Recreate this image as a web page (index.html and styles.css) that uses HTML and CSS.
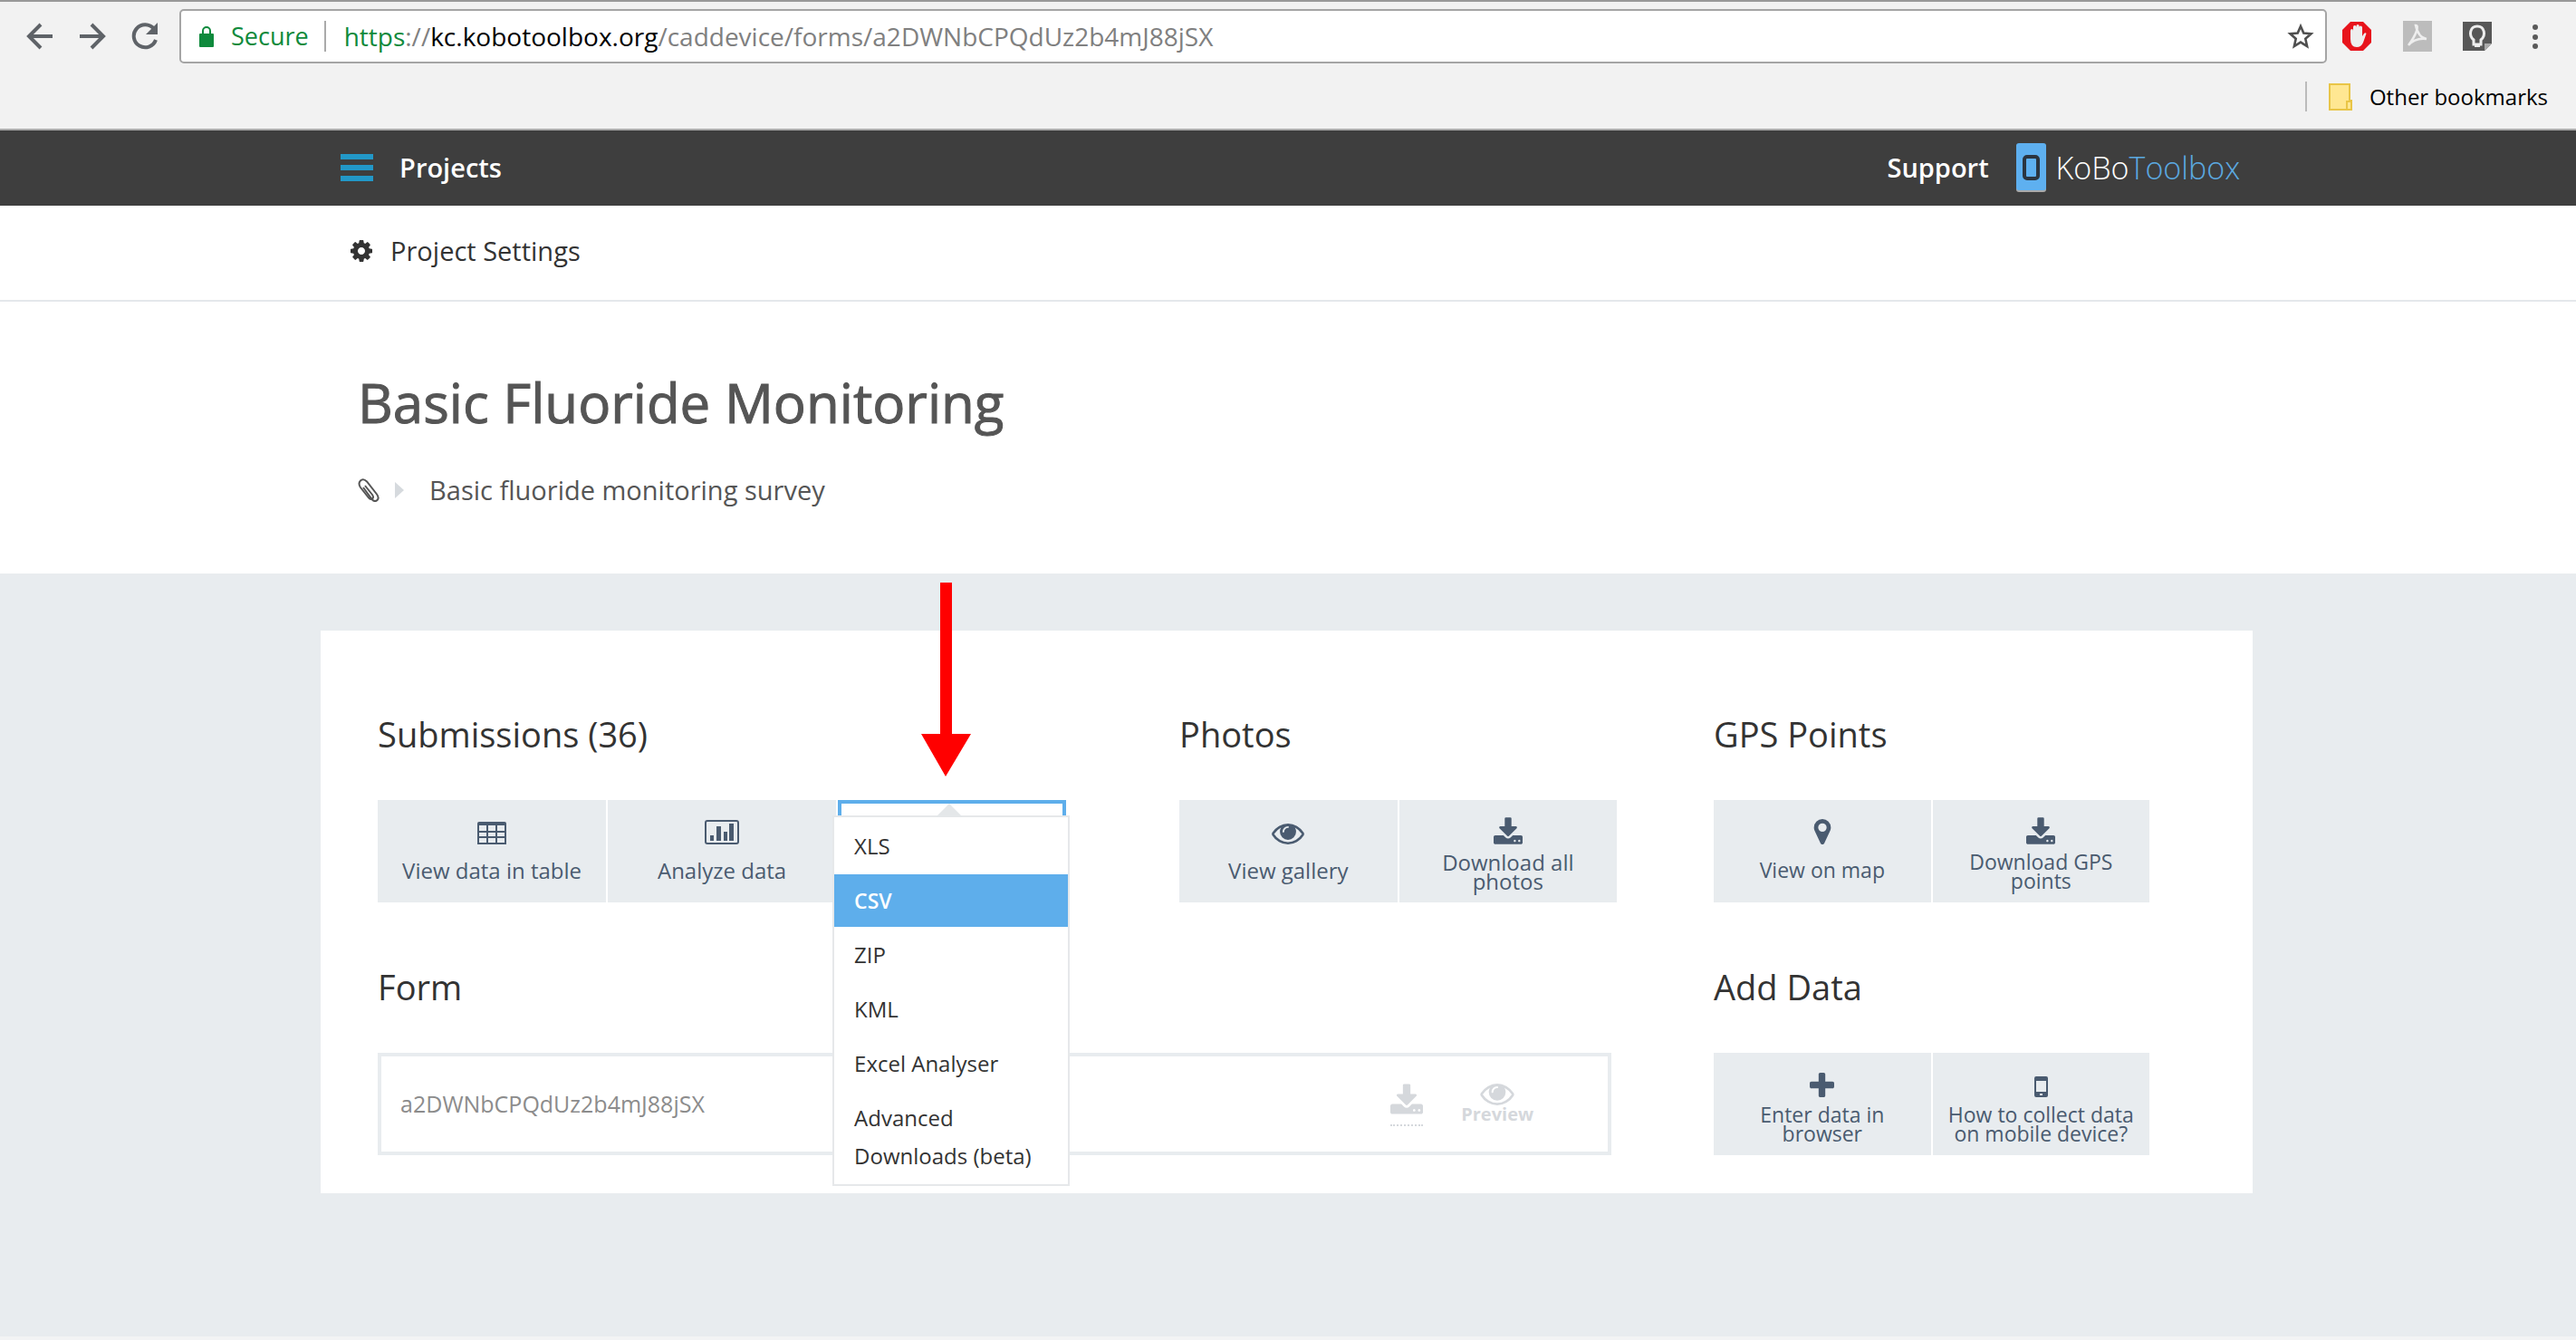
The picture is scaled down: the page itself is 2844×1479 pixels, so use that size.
FILE: index.html
```html
<!DOCTYPE html>
<html lang="en">
<head>
<meta charset="utf-8">
<meta name="viewport" content="width=device-width, initial-scale=1">
<title>Basic Fluoride Monitoring</title>
<link rel="stylesheet" href="styles.css">
</head>
<body>
<svg class="sprite" aria-hidden="true">
  <symbol id="i-download" viewBox="64 0 1664 1536"><path d="M1344 1344q0-26-19-45t-45-19-45 19-19 45 19 45 45 19 45-19 19-45zm256 0q0-26-19-45t-45-19-45 19-19 45 19 45 45 19 45-19 19-45zm128-224v320q0 40-28 68t-68 28h-1472q-40 0-68-28t-28-68v-320q0-40 28-68t68-28h465l135 136q58 56 136 56t136-56l136-136h464q40 0 68 28t28 68zm-325-569q17 41-14 70l-448 448q-18 19-45 19t-45-19l-448-448q-31-29-14-70 17-39 59-39h256v-448q0-26 19-45t45-19h256q26 0 45 19t19 45v448h256q42 0 59 39z"/></symbol>
  <symbol id="i-eye" viewBox="0 384 1792 1152"><path d="M1664 960q-152-236-381-353 61 104 61 225 0 185-131.5 316.5t-316.5 131.5-316.5-131.5-131.5-316.5q0-121 61-225-229 117-381 353 133 205 333.5 326.5t434.5 121.5 434.5-121.5 333.5-326.5zm-720-384q0-20-14-34t-34-14q-125 0-214.5 89.5t-89.5 214.5q0 20 14 34t34 14 34-14 14-34q0-86 61-147t147-61q20 0 34-14t14-34zm848 384q0 34-20 69-140 230-376.5 368.5t-499.5 138.5-499.5-139-376.5-368q-20-35-20-69t20-69q140-229 376.5-368t499.5-139 499.5 139 376.5 368q20 35 20 69z"/></symbol>
</svg>

<div class="browser">
  <div class="toolbar">
    <button class="tool" aria-label="Back"><svg width="30" height="30" viewBox="0 0 30 30"><path d="M29 15H3M16 2 3 15l13 13" fill="none" stroke="#5f6368" stroke-width="4"/></svg></button>
    <button class="tool" aria-label="Forward"><svg width="30" height="30" viewBox="0 0 30 30"><path d="M1 15h26M14 2l13 13-13 13" fill="none" stroke="#5f6368" stroke-width="4"/></svg></button>
    <button class="tool" aria-label="Reload"><svg width="30" height="30" viewBox="0 0 30 30"><path d="M25 7A12.500 12.500 0 1 0 27 19" fill="none" stroke="#5f6368" stroke-width="4"/><path d="M29 0v13H16z" fill="#5f6368"/></svg></button>
    <div class="address">
      <svg width="16" height="24" viewBox="0 0 16 24"><path d="M4 10V6a4 4 0 0 1 8 0v4" fill="none" stroke="#0f8a3c" stroke-width="2"/><rect y="9" width="16" height="15" rx="1" fill="#0f8a3c"/></svg>
      <span class="secure">Secure</span>
      <div class="url" role="textbox" aria-label="Address"><span class="scheme">https</span>://<span class="host">kc.kobotoolbox.org</span>/caddevice/forms/a2DWNbCPQdUz2b4mJ88jSX</div>
      <button class="tool" aria-label="Bookmark this page"><svg width="30" height="30" viewBox="0 0 30 30"><path d="m15 4 3.300 7.500 8.200.8-6.200 5.400 1.800 8.300-7.100-4.400L7.900 26l1.800-8.300-6.200-5.400 8.200-.8z" fill="none" stroke="#4f4f4f" stroke-width="2.600"/></svg></button>
    </div>
    <div class="extensions">
      <button class="tool" aria-label="Ad blocker"><svg width="34" height="34" viewBox="0 0 34 34"><path d="M10 1h14l9 9v14l-9 9H10l-9-9V10z" fill="#e8141c"/><path d="M10 20V11q0-2 1.500-2T13 11V7q0-2 1.700-2T16.500 7V5.500Q16.500 4 18 4t1.700 1.500V7q0-1.500 1.500-1.500T23 7v10l2-3q1.500-1.500 2.500 0L24 24q-2 5-7 5-7 0-7-9z" fill="#eee"/></svg></button>
      <button class="tool" aria-label="PDF"><svg width="32" height="34" viewBox="0 0 32 34"><path d="M0 0h32v34H0z" fill="#bcbcbc"/><path d="M14 5c4 0 1 10-8 22 5-6 12-8 20-7-6-1-10-6-12-15z" fill="none" stroke="#eee" stroke-width="2.500"/></svg></button>
      <button class="tool" aria-label="Keep"><svg width="32" height="32" viewBox="0 0 32 32"><path d="M0 0h32v24l-8 8H0z" fill="#585858"/><path d="M32 24h-8v8z" fill="#aaa"/><path d="M12 20c-6-5-4-15 4-15s10 10 4 15v5h-8z" fill="none" stroke="#eee" stroke-width="3"/><path d="M13 24h6v4h-6z" fill="#eee"/></svg></button>
      <button class="tool" aria-label="Menu"><svg width="28" height="32" viewBox="0 0 28 32" fill="#5a5a5a"><circle cx="14" cy="6" r="3"/><circle cx="14" cy="17" r="3"/><circle cx="14" cy="27" r="3"/></svg></button>
    </div>
  </div>
  <div class="bookmarks">
    <a class="bookmark" href="#"><svg width="26" height="30" viewBox="0 0 26 30"><path d="M1 1h22v18h2v10H1z" fill="#ffe792" stroke="#e9c547" stroke-width="2"/><path d="M20 28v-8h4" fill="none" stroke="#e9c547" stroke-width="2"/></svg>Other bookmarks</a>
  </div>
</div>

<header class="navbar">
  <div class="container navbar-inner">
    <a class="nav-link" href="#"><svg width="36" height="30" viewBox="0 0 36 30" fill="#2298c8"><path d="M0 0h36v6H0zM0 12h36v6H0zM0 24h36v6H0z"/></svg>Projects</a>
    <div class="nav-right">
      <a class="nav-link" href="#">Support</a>
      <a class="logo" href="#"><svg width="34" height="54" viewBox="0 0 34 54"><rect y="1" width="33" height="53" rx="3" fill="#a9a9a9"/><rect width="33" height="52" rx="3" fill="#5eb0f0"/><rect x="9" y="15" width="15" height="24" rx="3" fill="none" stroke="#2b3540" stroke-width="4"/></svg><span>KoBo<span class="logo-tail">Toolbox</span></span></a>
    </div>
  </div>
</header>

<nav class="subnav">
  <div class="container subnav-inner">
    <a class="settings" href="#"><svg width="24" height="24" viewBox="128 128 1536 1536"><path d="M1152 896q0-106-75-181t-181-75-181 75-75 181 75 181 181 75 181-75 75-181zm512-109v222q0 12-8 23t-20 13l-185 28q-19 54-39 91 35 50 107 138 10 12 10 25t-9 23q-27 37-99 108t-94 71q-12 0-26-9l-138-108q-44 23-91 38-16 136-29 186-7 28-36 28h-222q-14 0-24.500-8.500t-11.500-21.500l-28-184q-49-16-90-37l-141 107q-10 9-25 9-14 0-25-11-126-114-165-168-7-10-7-23 0-12 8-23 15-21 51-66.500t54-70.500q-27-50-41-99l-183-27q-13-2-21-12.500t-8-23.500v-222q0-12 8-23t19-13l186-28q14-46 39-92-40-57-107-138-10-12-10-24 0-10 9-23 26-36 98.500-107.500t94.500-71.500q13 0 26 10l138 107q44-23 91-38 16-136 29-186 7-28 36-28h222q14 0 24.500 8.500t11.500 21.500l28 184q49 16 90 37l142-107q9-9 24-9 13 0 25 10 129 119 165 170 7 8 7 22 0 12-8 23-15 21-51 66.500t-54 70.500q26 50 41 98l183 28q13 2 21 12.500t8 23.500z"/></svg>Project Settings</a>
  </div>
</nav>

<section class="hero">
  <div class="container hero-inner">
    <h1>Basic Fluoride Monitoring</h1>
    <p class="survey">
      <svg width="24" height="26" viewBox="0 0 24 26"><path d="M8 8l8 10q2 3 0 4.500t-4-1L3 10Q0 5.500 3 2.500t7 1l11 14q3 4 .500 6.500t-5.500-.5L6 10" fill="none" stroke="#555" stroke-width="2"/></svg>
      <svg class="survey-caret" width="10" height="18" viewBox="0 0 10 18"><path d="M0 0l10 9-10 9z" fill="#d6dade"/></svg>
      Basic fluoride monitoring survey
    </p>
  </div>
</section>

<main class="page">
  <div class="container card">
    <section class="group group-submissions">
      <h2>Submissions (36)</h2>
      <div class="tiles">
        <a class="tile" href="#"><span class="tile-icon"><svg width="32" height="25" viewBox="0 0 32 25"><path d="M1 3h30v21H1zM1 11h30M1 17h30M11 3v21M21 3v21" fill="none" stroke="#4a5b70" stroke-width="2"/><path d="M0 2q0-2 2-2h28q2 0 2 2v2H0z"/></svg></span><span class="tile-label">View data in table</span></a>
        <a class="tile" href="#"><span class="tile-icon"><svg width="38" height="27" viewBox="0 0 38 27"><rect x="1" y="1" width="36" height="25" rx="2" fill="none" stroke="#4a5b70" stroke-width="2"/><path d="M6 17h4v6H6zM13 7h5v16h-5zM21 13h4v10h-4zM27 4h5v19h-5z"/></svg></span><span class="tile-label">Analyze data</span></a>
        <div class="dropdown">
          <button class="tile tile-open" aria-label="Download data" aria-expanded="true"></button>
          <svg class="pointer" width="56" height="214" viewBox="0 0 56 214"><path d="M21 0h13v167h21L27 214 0 167h21z" fill="#f00"/></svg>
          <div class="menu">
            <a href="#">XLS</a>
            <a class="active" href="#">CSV</a>
            <a href="#">ZIP</a>
            <a href="#">KML</a>
            <a href="#">Excel Analyser</a>
            <a href="#">Advanced Downloads (beta)</a>
          </div>
        </div>
      </div>
    </section>

    <section class="group group-photos">
      <h2>Photos</h2>
      <div class="tiles">
        <a class="tile" href="#"><span class="tile-icon"><svg width="36" height="23"><use href="#i-eye"/></svg></span><span class="tile-label">View gallery</span></a>
        <a class="tile" href="#"><span class="tile-icon"><svg width="32" height="30"><use href="#i-download"/></svg></span><span class="tile-label">Download all photos</span></a>
      </div>
    </section>

    <section class="group group-narrow">
      <h2>GPS Points</h2>
      <div class="tiles">
        <a class="tile" href="#"><span class="tile-icon"><svg width="20" height="28" viewBox="384 128 1024 1536"><path d="M1152 640q0-106-75-181t-181-75-181 75-75 181 75 181 181 75 181-75 75-181zm256 0q0 109-33 179l-364 774q-16 33-47.500 52t-67.500 19-67.500-19-46.500-52l-365-774q-33-70-33-179 0-212 150-362t362-150 362 150 150 362z"/></svg></span><span class="tile-label">View on map</span></a>
        <a class="tile" href="#"><span class="tile-icon"><svg width="32" height="30"><use href="#i-download"/></svg></span><span class="tile-label">Download GPS points</span></a>
      </div>
    </section>

    <section class="group group-form">
      <h2>Form</h2>
      <div class="form-box">
        <span class="form-id">a2DWNbCPQdUz2b4mJ88jSX</span>
        <a class="form-download" href="#" aria-label="Download form"><svg width="36" height="34"><use href="#i-download"/></svg></a>
        <a class="form-preview" href="#"><svg width="38" height="24"><use href="#i-eye"/></svg>Preview</a>
      </div>
    </section>

    <section class="group group-narrow">
      <h2>Add Data</h2>
      <div class="tiles">
        <a class="tile" href="#"><span class="tile-icon"><svg width="27" height="27" viewBox="192 128 1408 1408"><path d="M1600 736v192q0 40-28 68t-68 28h-416v416q0 40-28 68t-68 28h-192q-40 0-68-28t-28-68v-416h-416q-40 0-68-28t-28-68v-192q0-40 28-68t68-28h416v-416q0-40 28-68t68-28h192q40 0 68 28t28 68v416h416q40 0 68 28t28 68z"/></svg></span><span class="tile-label">Enter data in browser</span></a>
        <a class="tile" href="#"><span class="tile-icon"><svg width="15" height="23" viewBox="0 0 15 23"><path fill-rule="evenodd" d="M2 0h11q2 0 2 2v19q0 2-2 2H2q-2 0-2-2V2q0-2 2-2zm0 5v12h11V5zm4 14v2h3v-2z"/></svg></span><span class="tile-label">How to collect data on mobile device?</span></a>
      </div>
    </section>
  </div>
</main>
</body>
</html>
```
FILE: styles.css
```css
* { box-sizing: border-box; }

body {
  margin: 0;
  min-height: 100vh;
  display: flex;
  flex-direction: column;
  background: #fff;
  color: #333;
  font-family: "Open Sans", sans-serif;
  font-size: 24px;
}

a { color: inherit; text-decoration: none; }
svg { display: block; flex: none; }
.sprite { position: absolute; width: 0; height: 0; }
.container { width: 75%; margin: 0 12.55% 0 12.45%; }

/* Browser chrome */
.browser {
  background: #f2f2f2;
  border-top: 2px solid #999;
  border-bottom: 2px solid #ababab;
}
.toolbar {
  display: flex;
  align-items: center;
  gap: 28px;
  padding: 8px 31px 0 29px;
}
.tool {
  flex: none;
  padding: 0;
  border: 0;
  background: none;
}
.address {
  flex: 1;
  display: flex;
  align-items: center;
  height: 60px;
  margin-left: -5px;
  padding: 0 12px 0 20px;
  border: 2px solid #a5a5a5;
  border-radius: 5px;
  background: #fff;
  font-size: 28px;
}
.secure {
  margin-left: 19px;
  padding-right: 17px;
  border-right: 2px solid #aaa;
  color: #0f8a3c;
  font-size: 27px;
  line-height: 34px;
}
.url { flex: 1; margin-left: 20px; color: #808080; }
.scheme { color: #0f8a3c; }
.host { color: #000; }
.extensions {
  display: flex;
  align-items: center;
  gap: 34px;
  margin-left: -12px;
}
.bookmarks {
  display: flex;
  justify-content: flex-end;
  padding: 20px 31px 19px 0;
}
.bookmark {
  display: flex;
  align-items: center;
  gap: 19px;
  padding-left: 24px;
  border-left: 2px solid #bbb;
  color: #000;
  line-height: 33px;
}

/* Site header */
.navbar { background: #3e3e3e; }
.navbar-inner {
  display: flex;
  align-items: center;
  justify-content: space-between;
  height: 83px;
  padding: 0 14px 2px 22px;
  color: #fff;
}
.nav-link {
  display: flex;
  align-items: center;
  gap: 29px;
  font-size: 29px;
  font-weight: 600;
}
.nav-right { display: flex; align-items: center; gap: 30px; }
.logo {
  display: flex;
  align-items: center;
  gap: 10px;
  font-size: 34px;
  font-weight: 300;
}
.logo-tail { color: #5ba9e0; }

.subnav { border-bottom: 2px solid #e4e8eb; }
.subnav-inner { padding: 30px 33px 34px; }
.settings {
  display: inline-flex;
  align-items: center;
  gap: 20px;
  fill: #333;
  font-size: 29px;
  line-height: 40px;
}

/* Project title */
.hero-inner { padding: 71px 41px 72px; color: #555; }
h1 {
  margin: 0 0 37px;
  font-size: 60px;
  font-weight: 400;
  line-height: 80px;
  -webkit-text-stroke: 1px #555;
}
.survey {
  display: flex;
  align-items: center;
  margin: 0;
  font-size: 29px;
  line-height: 40px;
}
.survey-caret { margin: 0 28px 0 17px; }

/* Dashboard */
.page {
  flex: 1;
  padding: 63px 0;
  background: #e8ecef;
  border-bottom: 4px solid #f2f3f4;
}
.card {
  display: grid;
  grid-template-columns: 885fr 590fr 481fr;
  row-gap: 67px;
  padding: 88px 114px 42px 63px;
  background: #fff;
}
.group-submissions { padding-right: 125px; }
.group-photos { padding-right: 107px; }
.group-form { grid-column: span 2; padding-right: 113px; }
h2 {
  margin: 0 0 47px;
  font-size: 38px;
  font-weight: 400;
  line-height: 52px;
}
.tiles {
  display: grid;
  grid-auto-flow: column;
  grid-auto-columns: 1fr;
  gap: 2px;
}
.tile {
  display: flex;
  flex-direction: column;
  align-items: center;
  gap: 9px;
  height: 113px;
  padding: 19px 12px 0;
  background: #e8ecef;
  color: #4a5b70;
  fill: #4a5b70;
  line-height: 21px;
  text-align: center;
}
.group-narrow .tile { padding: 19px 8px 0; font-size: 23px; }
.group-photos .tile { padding: 19px 40px 0; }
.tile-icon { display: flex; align-items: flex-end; height: 30px; }
.tile-label { display: flex; align-items: center; min-height: 38px; }

.dropdown { position: relative; }
.tile-open {
  width: 100%;
  border: 4px solid #5eaeeb;
  background: #fff;
}
.pointer {
  position: absolute;
  left: 92px;
  bottom: calc(100% + 26px);
}
.menu {
  position: absolute;
  z-index: 1;
  top: 17px;
  left: -6px;
  right: -4px;
  padding: 3px 0 2px;
  border: 2px solid #e6e8ea;
  background: #fff;
}
.menu::before {
  content: "";
  position: absolute;
  left: 112px;
  bottom: 100%;
  border: 15px solid transparent;
  border-top: 0;
  border-bottom-color: #e4e7e9;
}
.menu a {
  display: block;
  padding: 8px 22px;
  line-height: 42px;
}
.menu a + a { margin-top: 2px; }
.menu .active { background: #5eaeeb; color: #fff; font-size: 23px; font-weight: 600; }

.form-box {
  display: flex;
  align-items: center;
  height: 113px;
  padding: 0 82px 2px 21px;
  border: 4px solid #e8ecef;
  color: #d5d8dc;
  fill: #d5d8dc;
}
.form-id { flex: 1; color: #8c8c8c; font-size: 25px; }
.form-download { padding: 4px 0 11px; border-bottom: 2px dotted #d5d8dc; }
.form-preview {
  display: flex;
  flex-direction: column;
  align-items: center;
  margin-left: 42px;
  font-size: 20px;
  font-weight: 700;
  line-height: 20px;
}
```
